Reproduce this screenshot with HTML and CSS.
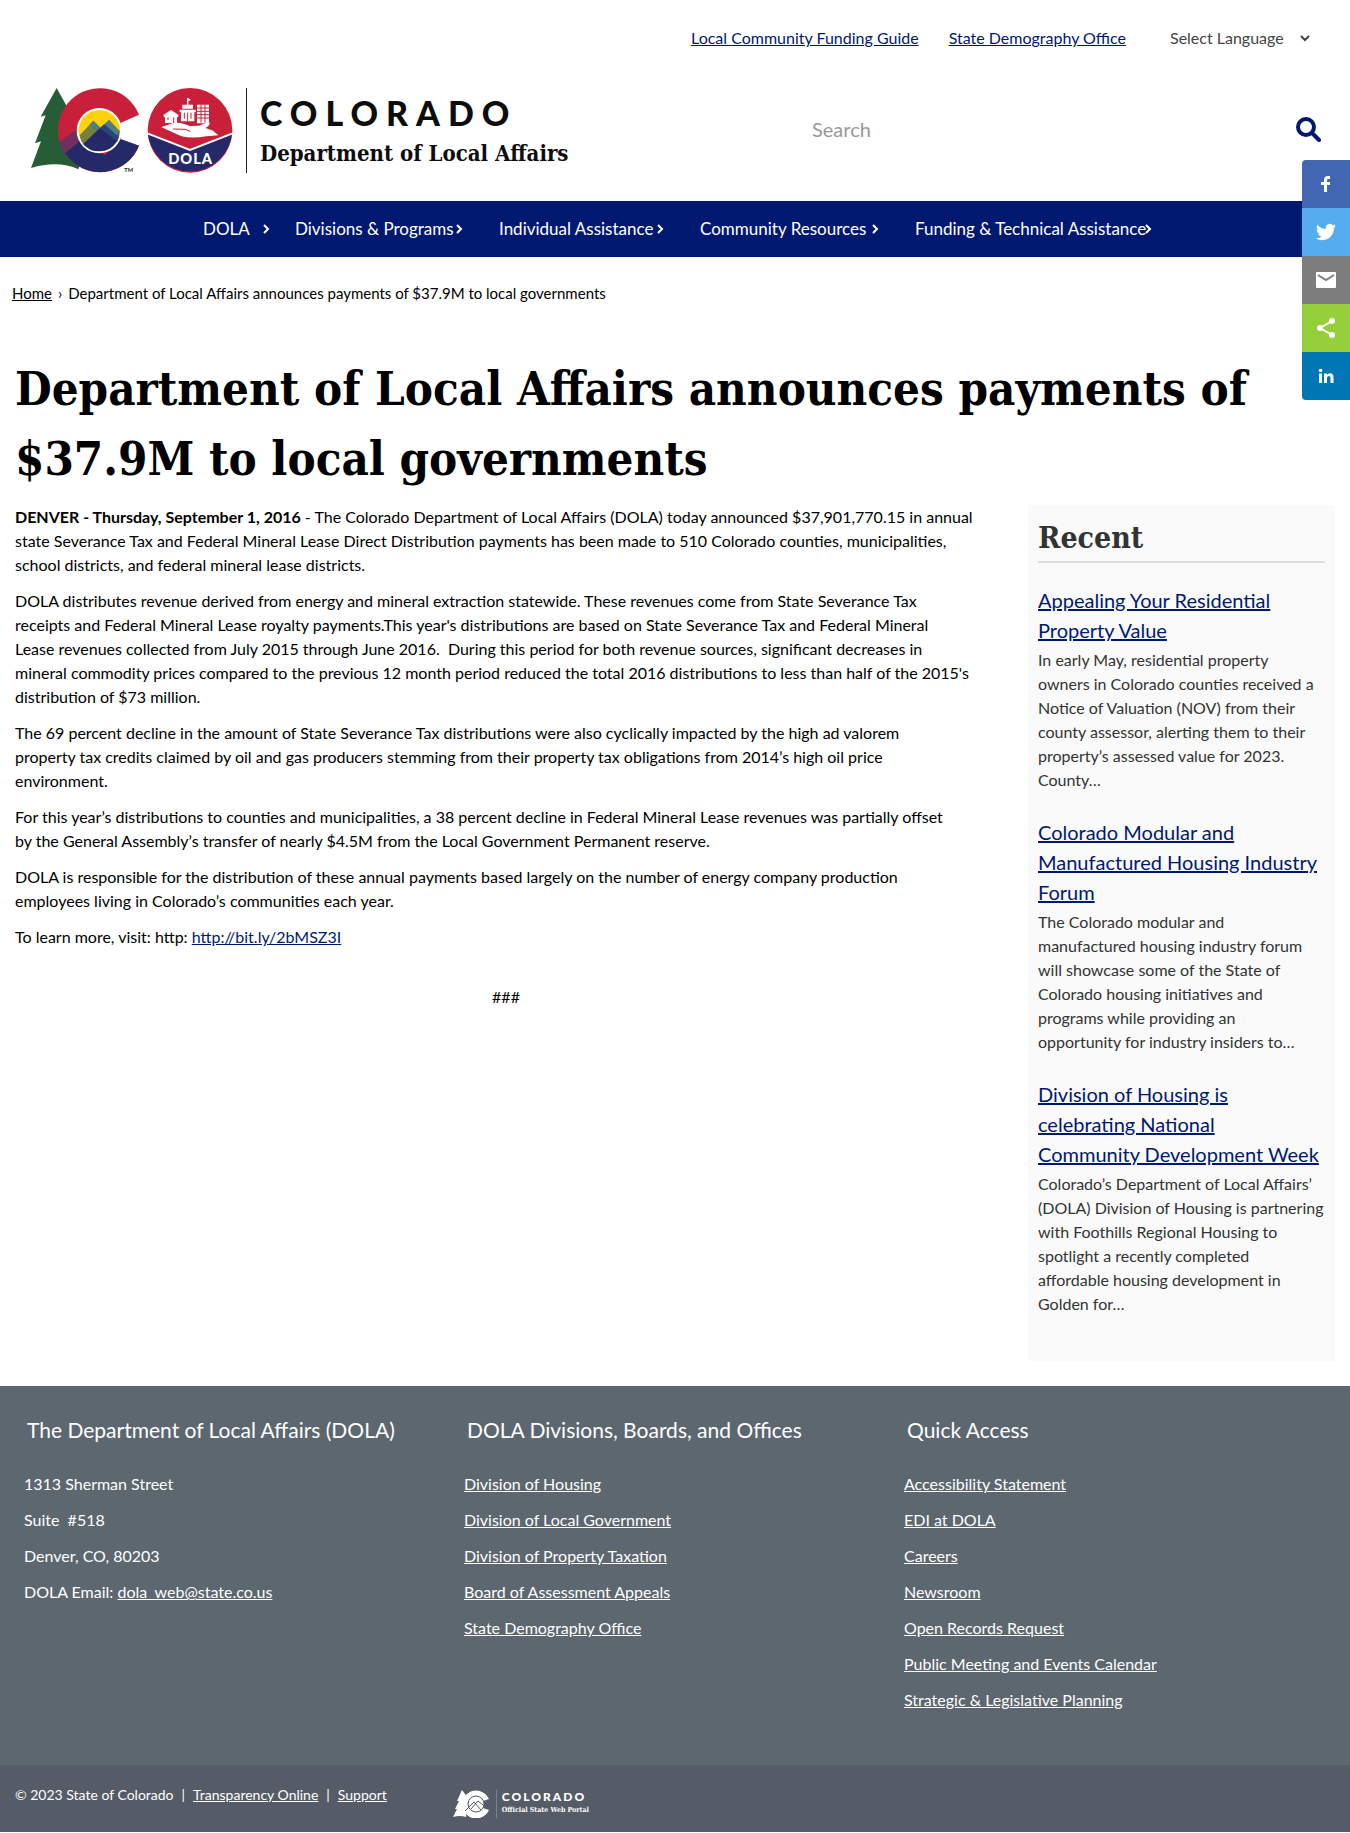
FILE: index.html
```html
<!DOCTYPE html>
<html lang="en">
<head>
<meta charset="utf-8">
<meta name="viewport" content="width=device-width, initial-scale=1">
<title>Department of Local Affairs announces payments of $37.9M to local governments</title>
<link rel="stylesheet" href="styles.css">
</head>
<body>
<header>
  <div class="topbar">
    <a class="link" href="#">Local Community Funding Guide</a>
    <a class="link" href="#">State Demography Office</a>
    <div class="language">
      <select aria-label="Select Language"><option>Select Language</option></select>
      <svg width="10" height="8" viewBox="0 0 10 8" aria-hidden="true"><path d="M1 2l4 4 4-4" fill="none" stroke="#444" stroke-width="2"/></svg>
    </div>
  </div>
  <div class="masthead">
    <a class="brand" href="#">
      <svg class="emblem" width="206" height="90" viewBox="15 18 618 270" aria-hidden="true">
        <path d="M95 24l50 90 20 140-5 14q-60-28-142-4l30-80-18 6 32-84-15 4z" fill="#265c36"/>
        <path d="M342 104A126 126 0 1 0 342 197L288 178V128z" fill="#c8203a"/>
        <path d="M103 185q6 22 17 38l49-40 10-50z" fill="#70305f"/>
        <path d="M120 220A126 126 0 0 0 342 197L288 178 240 225 165 183z" fill="#232a67"/>
        <circle cx="223" cy="152" r="68" fill="#fff"/>
        <circle cx="223" cy="152" r="62" fill="#fdd20a"/>
        <path d="M164 166l41-44 36 36-62 40q-12-12-15-32z" fill="#75803a"/>
        <path d="M222 148l30-28 32 34q0 16-8 32z" fill="#33618e"/>
        <path d="M205 122l22 22-10 10-24-18zM252 120l32 34-10 12-34-34z" fill="#4c7d80"/>
        <path d="M175 191l50-47 52 39q-20 31-54 31-32 0-48-23z" fill="#232a67"/>
        <path d="M225 144l12-11 44 38-4 12z" fill="#294578"/>
        <circle cx="495" cy="151" r="127" fill="#c8203a"/>
        <path d="M369 163l126 49 126-49a127 127 0 0 1-252 0z" fill="#232a67"/>
        <path d="M369 161l126 49 126-49" fill="none" stroke="#fff" stroke-width="6"/>
        <path d="M408 142l34-12q16-4 38 3l14 5 28-1 22-9q14-4 8 8l-10 8 22 8 16 14-36 3q-60 10-90-7l-44-20z" fill="#fff"/>
        <path d="M444 147l36 1 16 6" fill="none" stroke="#c8203a" stroke-width="3"/>
        <path d="M416 104l22-14 22 14v7h-4v18h-36v-18h-4zM464 89h48v8h-4v27h-40v-27h-4zM472 74h32v12h-32zM486 54h4v20h-4zM490 55l8 4-8 5zM516 74h36v56h-36z" fill="#fff"/>
        <path d="M429 112v8M446 112v17M478 98v18M488 98v26M498 98v18M516 84h36M516 94h36M516 104h36M516 114h36M528 74v54M540 74v54" fill="none" stroke="#c8203a" stroke-width="3"/>
        <text x="497" y="252" text-anchor="middle" class="emblem-name">DOLA</text>
        <text x="298" y="275" class="emblem-tm">TM</text>
      </svg>
      <span class="brand-text"><span class="brand-state">COLORADO</span><span class="brand-dept">Department of Local Affairs</span></span>
    </a>
    <form class="search">
      <input type="text" placeholder="Search" aria-label="Search">
      <button type="button" aria-label="Search">
        <svg width="26" height="26" viewBox="0 0 26 26" aria-hidden="true"><circle cx="11" cy="11" r="8" fill="none" stroke="#001970" stroke-width="4"/><path d="M17 17l7 7" stroke="#001970" stroke-width="4" stroke-linecap="round"/></svg>
      </button>
    </form>
  </div>
  <nav class="nav" aria-label="Main">
    <ul>
      <li class="nav-dola"><a href="#">DOLA</a><svg width="7" height="10" viewBox="0 0 7 10"><path d="M1 1l4 4-4 4"/></svg></li>
      <li class="nav-divisions"><a href="#">Divisions &amp; Programs</a><svg width="7" height="10" viewBox="0 0 7 10"><path d="M1 1l4 4-4 4"/></svg></li>
      <li class="nav-individual"><a href="#">Individual Assistance</a><svg width="7" height="10" viewBox="0 0 7 10"><path d="M1 1l4 4-4 4"/></svg></li>
      <li class="nav-community"><a href="#">Community Resources</a><svg width="7" height="10" viewBox="0 0 7 10"><path d="M1 1l4 4-4 4"/></svg></li>
      <li class="nav-funding"><a href="#">Funding &amp; Technical Assistance</a><svg width="7" height="10" viewBox="0 0 7 10"><path d="M1 1l4 4-4 4"/></svg></li>
    </ul>
  </nav>
</header>
<div class="share" aria-label="Share">
  <a class="facebook" href="#" aria-label="Facebook"><svg width="20" height="20" viewBox="0 0 20 20"><path d="M8 18v-7H5V8h3V6q0-4 4-4h2v3h-2q-1 0-1 1v2h3v3h-3v7z"/></svg></a>
  <a class="twitter" href="#" aria-label="Twitter"><svg width="20" height="20" viewBox="0 0 24 24"><path d="M23.950 4.570a10 10 0 0 1-2.820.770 4.960 4.960 0 0 0 2.160-2.720c-.950.550-2 .950-3.130 1.180a4.920 4.920 0 0 0-8.380 4.480C7.690 8.090 4.070 6.130 1.640 3.160a4.920 4.920 0 0 0 1.520 6.570 4.900 4.900 0 0 1-2.230-.610v.060a4.920 4.920 0 0 0 3.950 4.830 5 5 0 0 1-2.210.080 4.940 4.940 0 0 0 4.600 3.420A9.870 9.870 0 0 1 0 19.540a14 14 0 0 0 7.550 2.210c9.050 0 14-7.500 14-13.980 0-.210 0-.420-.020-.630a9.900 9.900 0 0 0 2.420-2.570z"/></svg></a>
  <a class="email" href="#" aria-label="Email"><svg width="20" height="16" viewBox="0 0 20 16"><rect width="20" height="16" rx="1"/><path d="M2 3l8 5 8-5" fill="none" stroke="#7d7d7d" stroke-width="2"/></svg></a>
  <a class="sharethis" href="#" aria-label="ShareThis"><svg width="20" height="20" viewBox="0 0 20 20"><path d="M16 3L4 10l12 7" fill="none" stroke="#fff" stroke-width="2"/><circle cx="16" cy="3" r="3"/><circle cx="4" cy="10" r="3"/><circle cx="16" cy="17" r="3"/></svg></a>
  <a class="linkedin" href="#" aria-label="LinkedIn"><svg width="16" height="16" viewBox="0 0 16 16"><circle cx="2.500" cy="2.500" r="1.800"/><path d="M1 5.500h3V15H1zM6 5.500h3v1.300q1-1.500 3-1.500 3.500 0 3.500 4V15h-3v-5q0-2-1.500-2-2 0-2 2v5H6z"/></svg></a>
</div>
<nav class="breadcrumb" aria-label="Breadcrumb"><a href="#">Home</a><span>›</span><span>Department of Local Affairs announces payments of $37.9M to local governments</span></nav>
<main>
  <h1>Department of Local Affairs announces payments of $37.9M to local governments</h1>
  <div class="columns">
    <article>
      <p><strong>DENVER - Thursday, September 1, 2016</strong> - The Colorado Department of Local Affairs (DOLA) today announced $37,901,770.15 in annual<br> state Severance Tax and Federal Mineral Lease Direct Distribution payments has been made to 510 Colorado counties, municipalities,<br> school districts, and federal mineral lease districts.</p>
      <p>DOLA distributes revenue derived from energy and mineral extraction statewide. These revenues come from State Severance Tax<br> receipts and Federal Mineral Lease royalty payments.This year's distributions are based on State Severance Tax and Federal Mineral<br> Lease revenues collected from July 2015 through June 2016.&nbsp; During this period for both revenue sources, significant decreases in<br> mineral commodity prices compared to the previous 12 month period reduced the total 2016 distributions to less than half of the 2015's<br> distribution of $73 million.</p>
      <p>The 69 percent decline in the amount of State Severance Tax distributions were also cyclically impacted by the high ad valorem<br> property tax credits claimed by oil and gas producers stemming from their property tax obligations from 2014’s high oil price<br> environment.</p>
      <p>For this year’s distributions to counties and municipalities, a 38 percent decline in Federal Mineral Lease revenues was partially offset<br> by the General Assembly’s transfer of nearly $4.5M from the Local Government Permanent reserve.</p>
      <p>DOLA is responsible for the distribution of these annual payments based largely on the number of energy company production<br> employees living in Colorado’s communities each year.</p>
      <p>To learn more, visit: http: <a class="link" href="#">http://bit.ly/2bMSZ3I</a></p>
      <p class="end-mark">###</p>
    </article>
    <aside>
      <h2>Recent</h2>
      <section>
        <h3><a class="link" href="#">Appealing Your Residential Property Value</a></h3>
        <p>In early May, residential property<br> owners in Colorado counties received a<br> Notice of Valuation (NOV) from their<br> county assessor, alerting them to their<br> property’s assessed value for 2023.<br> County…</p>
      </section>
      <section>
        <h3><a class="link" href="#">Colorado Modular and Manufactured Housing Industry Forum</a></h3>
        <p>The Colorado modular and<br> manufactured housing industry forum<br> will showcase some of the State of<br> Colorado housing initiatives and<br> programs while providing an<br> opportunity for industry insiders to…</p>
      </section>
      <section>
        <h3><a class="link" href="#">Division of Housing is<br> celebrating National<br> Community Development Week</a></h3>
        <p>Colorado’s Department of Local Affairs’<br> (DOLA) Division of Housing is partnering<br> with Foothills Regional Housing to<br> spotlight a recently completed<br> affordable housing development in<br> Golden for…</p>
      </section>
    </aside>
  </div>
</main>
<footer>
  <div class="footer-columns">
    <section>
      <h2>The Department of Local Affairs (DOLA)</h2>
      <ul><li>1313 Sherman Street</li><li>Suite&nbsp; #518</li><li>Denver, CO, 80203</li><li>DOLA Email: <a href="#">dola_web@state.co.us</a></li></ul>
    </section>
    <section>
      <h2>DOLA Divisions, Boards, and Offices</h2>
      <ul>
        <li><a href="#">Division of Housing</a></li>
        <li><a href="#">Division of Local Government</a></li>
        <li><a href="#">Division of Property Taxation</a></li>
        <li><a href="#">Board of Assessment Appeals</a></li>
        <li><a href="#">State Demography Office</a></li>
      </ul>
    </section>
    <section>
      <h2>Quick Access</h2>
      <ul>
        <li><a href="#">Accessibility Statement</a></li>
        <li><a href="#">EDI at DOLA</a></li>
        <li><a href="#">Careers</a></li>
        <li><a href="#">Newsroom</a></li>
        <li><a href="#">Open Records Request</a></li>
        <li><a href="#">Public Meeting and Events Calendar</a></li>
        <li><a href="#">Strategic &amp; Legislative Planning</a></li>
      </ul>
    </section>
  </div>
  <div class="legal">
    <p>© 2023 State of Colorado<span>|</span><a href="#">Transparency Online</a><span>|</span><a href="#">Support</a></p>
    <a class="portal" href="#">
      <svg width="37" height="28" viewBox="0 0 37 28" aria-hidden="true"><path d="M9 0l6 8-2 19q-6-2-13 0l4-8H2l4-8H4z" fill="#fff"/><path d="M36 9A14 14 0 1 0 36 20l-6-2v-7z" fill="#fff"/><circle cx="23" cy="14" r="8" fill="#fff" stroke="#555c67"/><path d="M12 21l9-9 7 8M18 19l7-8 5 4" fill="none" stroke="#555c67"/></svg>
      <span class="portal-text"><span class="portal-state">COLORADO</span><span class="portal-name">Official State Web Portal</span></span>
    </a>
  </div>
</footer>
</body>
</html>
```
FILE: styles.css
```css
* { box-sizing: border-box; }
body { margin: 0; position: relative; background: #fff; color: #000; font: 16px/24px Lato, sans-serif; }
h1, h2, h3, p, ul { margin: 0; padding: 0; }
ul { list-style: none; }
a { color: inherit; }
.link { color: #001970; }

.topbar { display: flex; justify-content: flex-end; align-items: center; gap: 30px; height: 76px; padding-right: 40px; }
.language { display: flex; align-items: center; gap: 12px; margin-left: 14px; }
.language select { appearance: none; min-width: 118px; border: 0; padding: 0; background: none; color: #444; font: inherit; }

.masthead { display: flex; align-items: flex-start; justify-content: space-between; height: 125px; padding: 10px 29px 0 30px; }
.brand { display: flex; color: #0d0d0d; text-decoration: none; }
.brand-text { display: flex; flex-direction: column; margin: 2px 0 0 10px; height: 85px; padding: 6px 0 0 13px; border-left: 1px solid #222; white-space: nowrap; }
.brand-state { font-size: 34px; font-weight: 900; line-height: 38px; letter-spacing: 8px; }
.brand-dept { font: bold 22px/42px "DejaVu Serif Condensed", "DejaVu Serif", serif; }
.emblem-name { fill: #fff; font: 900 44px Lato, sans-serif; letter-spacing: 3px; }
.emblem-tm { fill: #222; font: bold 17px Lato, sans-serif; }
.search { display: flex; align-items: center; width: 509px; padding-top: 27px; }
.search input { flex: 1; min-width: 0; border: 0; padding: 0; background: none; font: 20px/32px Lato, sans-serif; }
.search input::placeholder { color: #999; opacity: 1; }
.search button { display: flex; padding: 0; border: 0; background: none; }

.nav { background: #001970; color: #fff; font-size: 17px; }
.nav ul { display: flex; width: 990px; max-width: 100%; height: 56px; margin: 0 auto; padding-left: 23px; align-items: center; gap: 36px; }
.nav li { display: flex; align-items: center; justify-content: space-between; white-space: nowrap; }
.nav li a { text-decoration: none; }
.nav li svg { flex: none; fill: none; stroke: #fff; stroke-width: 2; }
.nav-dola { width: 67px; margin-right: -11px; }
.nav-divisions { width: 168px; }
.nav-individual { width: 165px; }
.nav-community { width: 179px; }
.nav-funding { width: 237px; }
.nav-funding a { min-width: 0; }

.share { position: absolute; top: 160px; right: 0; width: 48px; border-radius: 4px 0 0 4px; overflow: hidden; }
.share a { display: flex; align-items: center; justify-content: center; height: 48px; }
.share svg { fill: #fff; }
.facebook { background: #4267b2; }
.twitter { background: #55acee; }
.email { background: #7d7d7d; }
.sharethis { background: #95d03a; }
.linkedin { background: #0077b5; }

.breadcrumb { display: flex; gap: 6px; padding: 24px 12px 0; font-size: 15px; }
main { padding: 49px 15px 25px; }
h1 { font: bold 47px/70px "DejaVu Serif Condensed", "DejaVu Serif", serif; padding-right: 60px; }
.columns { display: grid; grid-template-columns: minmax(0, 1fr) 307px; column-gap: 31px; align-items: start; padding-top: 9px; }
article { padding-top: 2px; }
article p { margin-bottom: 12px; }
article .end-mark { margin-top: 36px; text-align: center; }
aside { margin-top: 2px; padding: 10px 10px 20px; background: #fafafa; color: #333; }
aside h2 { font: bold 30px/46px "DejaVu Serif Condensed", "DejaVu Serif", serif; border-bottom: 2px solid #ddd; margin-bottom: 22px; }
aside h3 { margin-bottom: 3px; font-size: 20px; font-weight: 400; line-height: 30px; }
aside section { margin-bottom: 25px; }

footer { background: #5c6770; color: #fff; }
.footer-columns { display: grid; grid-template-columns: repeat(3, 440px); min-height: 379px; padding: 29px 0 0 24px; }
.footer-columns h2 { padding-left: 3px; font-size: 21px; font-weight: 400; line-height: 30px; margin-bottom: 27px; }
.footer-columns li { margin-bottom: 12px; }
.legal { display: flex; align-items: flex-start; gap: 66px; height: 67px; padding: 18px 15px 0; background: #555c67; font-size: 14px; }
.legal span { margin: 0 8px; }
.portal { display: flex; margin-top: 7px; text-decoration: none; }
.legal .portal-text { display: flex; flex-direction: column; margin: 0 0 0 6px; padding-left: 5px; border-left: 1px solid #7b828b; }
.legal .portal-state { margin: 0; font-size: 12px; font-weight: 900; line-height: 14px; letter-spacing: 2px; }
.legal .portal-name { margin: 0; font: bold 7px/12px "DejaVu Serif Condensed", "DejaVu Serif", serif; }
```
